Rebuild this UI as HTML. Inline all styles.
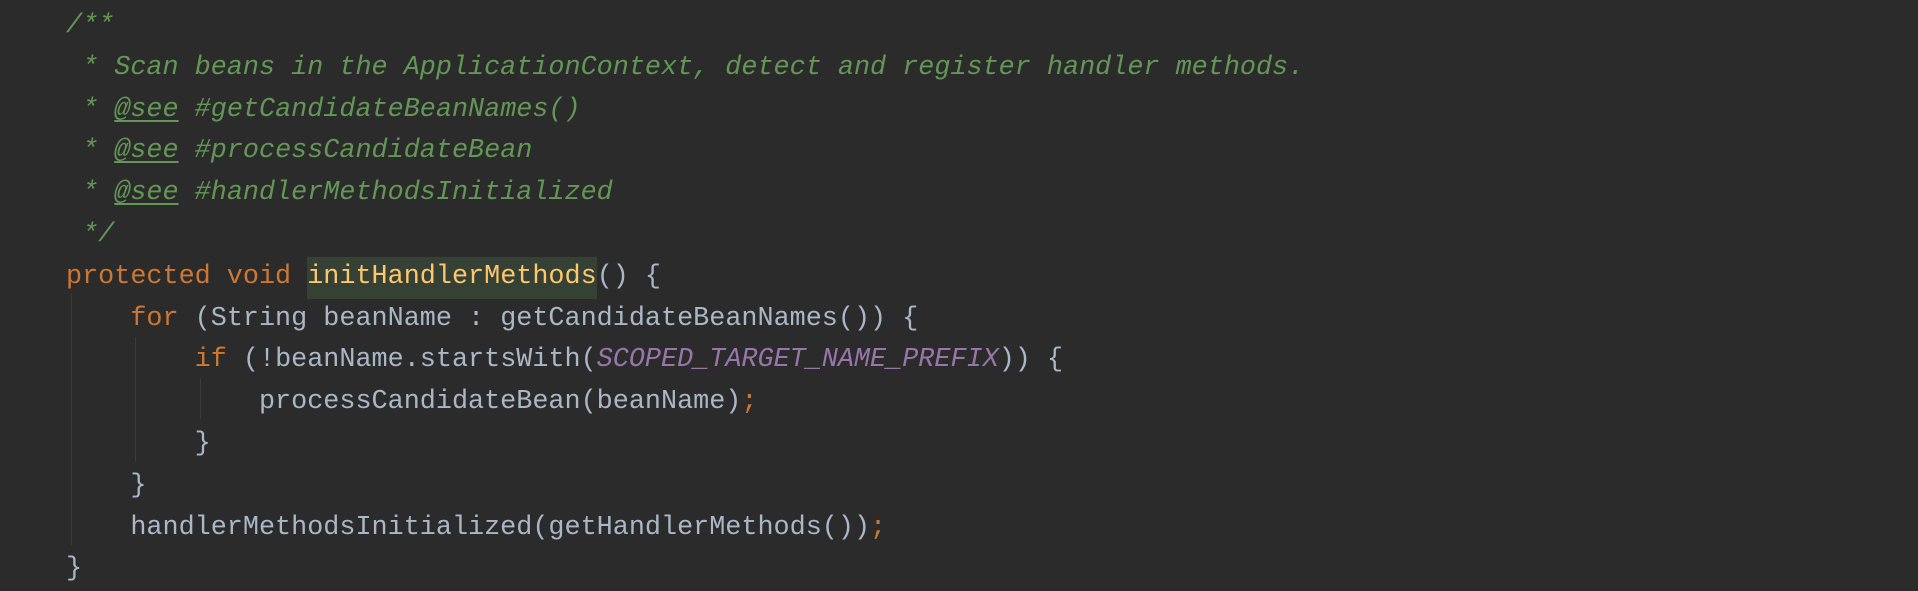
<!DOCTYPE html>
<html><head><meta charset="utf-8"><style>
html,body{margin:0;padding:0;background:#2b2b2b;width:1918px;height:590px;overflow:hidden}
.code{position:absolute;left:66px;top:6px;font-family:"Liberation Mono",monospace;font-size:26.8px;line-height:41.8px;color:#a9b7c6;white-space:pre}
.c{color:#629755;font-style:italic}
.u{text-decoration:underline;text-underline-offset:4px}
.k{color:#cc7832}
.f{color:#ffc66d;background:#344134;display:inline-block;line-height:41.8px;vertical-align:top}
.p{color:#9876aa;font-style:italic}
.g{position:absolute;width:1px;background:#3b3b3b}
</style></head><body>
<div class="g" style="left:71px;top:293px;height:252px"></div>
<div class="g" style="left:135px;top:337px;height:125px"></div>
<div class="g" style="left:200px;top:378px;height:41px"></div>
<div class="code"><span class="c">/**
 * Scan beans in the ApplicationContext, detect and register handler methods.
 * <span class="u">@see</span> #getCandidateBeanNames()
 * <span class="u">@see</span> #processCandidateBean
 * <span class="u">@see</span> #handlerMethodsInitialized
 */</span>
<span class="k">protected void </span><span class="f">initHandlerMethods</span>() {
    <span class="k">for </span>(String beanName : getCandidateBeanNames()) {
        <span class="k">if </span>(!beanName.startsWith(<span class="p">SCOPED_TARGET_NAME_PREFIX</span>)) {
            processCandidateBean(beanName)<span class="k">;</span>
        }
    }
    handlerMethodsInitialized(getHandlerMethods())<span class="k">;</span>
}</div>
</body></html>
